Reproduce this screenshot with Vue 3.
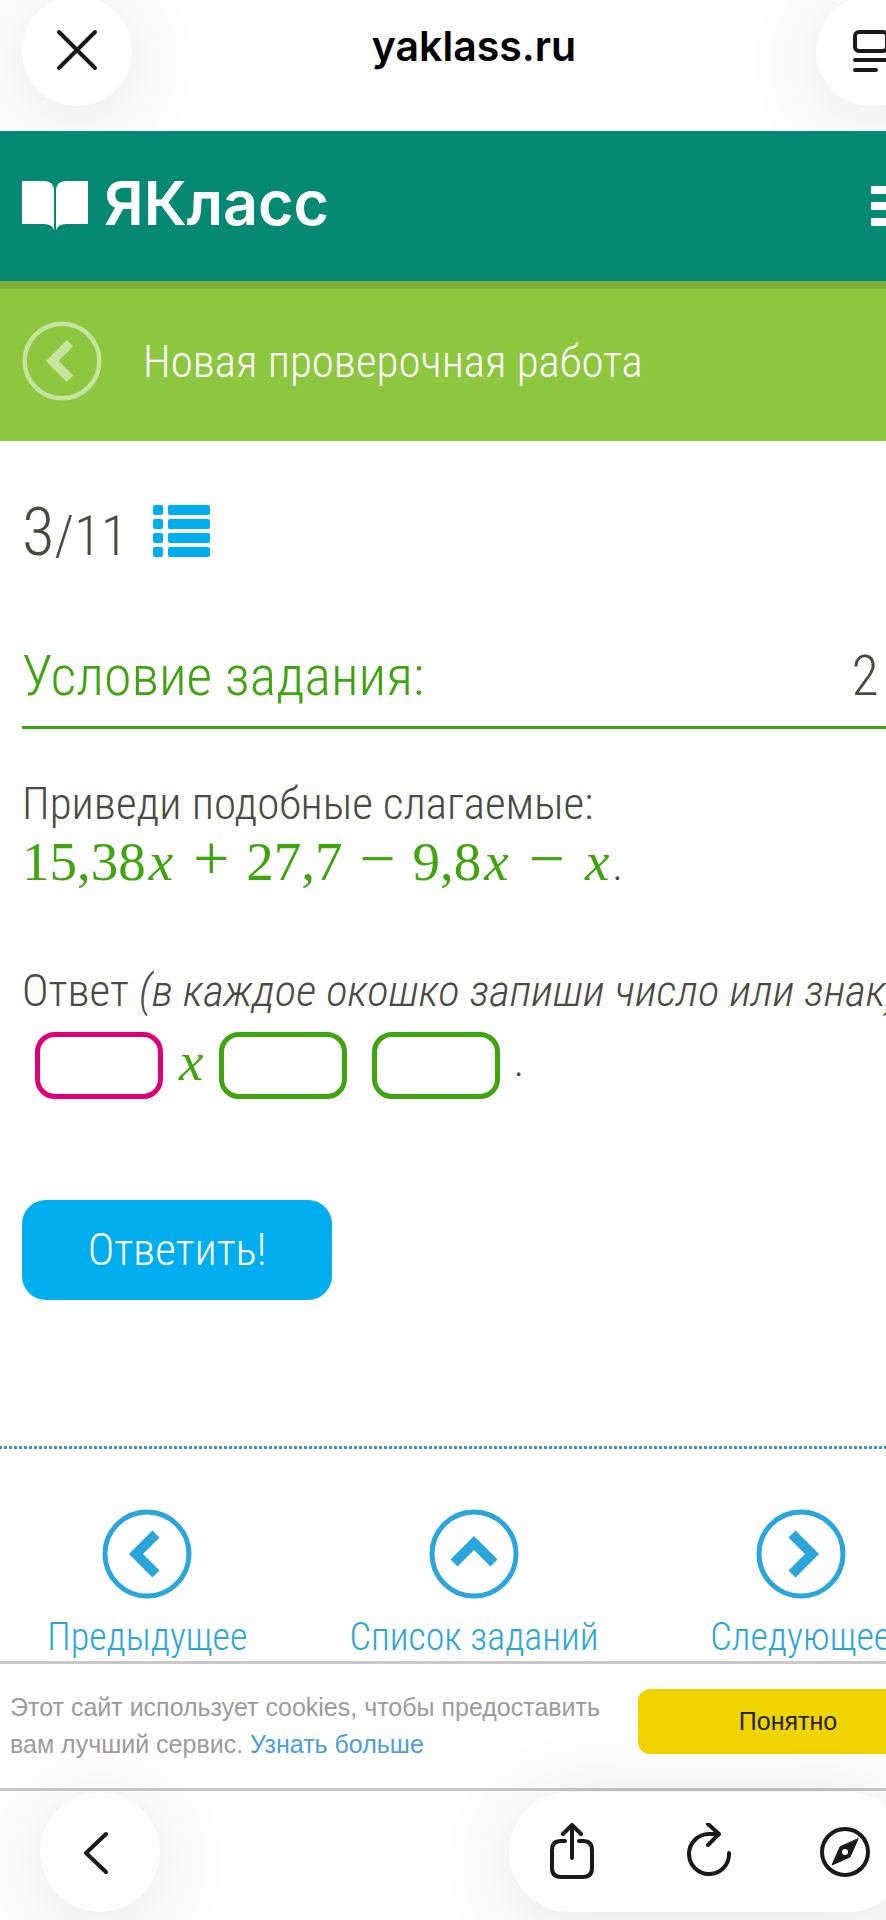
<script setup>
    import { ref } from 'vue';

    const answers = ref(['', '', '']);

    const navLinks = [
        { text: 'Предыдущее', points: '54,25 34,45 54,65' },
        { text: 'Список заданий', points: '25,54 45,34 65,54' },
        { text: 'Следующее', points: '36,25 56,45 36,65' },
    ]
</script>

<template>
    <div class="viewport">
        <div class="page">
            <header class="address-bar">
                <button class="round-button" aria-label="Закрыть">
                    <svg width="42" height="42" viewBox="0 0 42 42">
                        <path d="M3 2 L39 38 M39 2 L3 38" />
                    </svg>
                </button>
                <span class="address">yaklass.ru</span>
                <button class="round-button" aria-label="Режим чтения">
                    <svg width="36" height="42" viewBox="0 0 36 42">
                        <rect x="2" y="2" width="32" height="19" rx="4" />
                        <path d="M2 30 H34 M2 40 H23" />
                    </svg>
                </button>
            </header>

            <div class="site-header">
                <a href="#" class="logo">
                    <svg width="66" height="50" viewBox="0 0 66 50">
                        <path d="M0 0 H22 Q32 0 32 10 V49 Q30 43 22 43 H0 Z" />
                        <path d="M66 0 H44 Q34 0 34 10 V49 Q36 43 44 43 H66 Z" />
                    </svg>
                    <span>ЯКласс</span>
                </a>
                <button class="menu-button" aria-label="Меню">
                    <i></i><i></i><i></i>
                </button>
            </div>

            <div class="title-bar">
                <a href="#" class="back-link" aria-label="Назад">
                    <svg width="80" height="80" viewBox="0 0 90 90">
                        <circle cx="45" cy="45" r="42" />
                        <polyline points="54,25 34,45 54,65" />
                    </svg>
                </a>
                <h1>Новая проверочная работа</h1>
            </div>

            <main class="task">
                <div class="counter">
                    <p><span class="current">3</span>/11</p>
                    <button class="list-button" aria-label="Список">
                        <svg width="57" height="52" viewBox="0 0 57 52">
                            <g v-for="n in 4" :key="n">
                                <rect x="0" :y="(n - 1) * 14" width="10" height="10" rx="2" />
                                <rect x="15" :y="(n - 1) * 14" width="42" height="10" rx="2" />
                            </g>
                        </svg>
                    </button>
                </div>

                <div class="task-heading">
                    <h2>Условие задания:</h2>
                    <span>2 Б</span>
                </div>

                <p class="question">Приведи подобные слагаемые:</p>
                <p class="formula">
                    <span class="math">15,38<i>x</i><b>+</b>27,7<b>−</b>9,8<i>x</i><b>−</b><i>x</i></span>.
                </p>

                <p class="hint">Ответ <em>(в каждое окошко запиши число или знак):</em></p>
                <div class="answer-row">
                    <input v-model="answers[0]" class="active" type="text" aria-label="Коэффициент">
                    <span class="math"><i>x</i></span>
                    <input v-model="answers[1]" type="text" aria-label="Знак">
                    <input v-model="answers[2]" class="last" type="text" aria-label="Число">
                    <span>.</span>
                </div>

                <button class="submit">Ответить!</button>
            </main>

            <nav class="task-nav">
                <a v-for="link in navLinks" :key="link.text" href="#">
                    <svg width="90" height="90" viewBox="0 0 90 90">
                        <circle cx="45" cy="45" r="42" />
                        <polyline :points="link.points" />
                    </svg>
                    <span>{{ link.text }}</span>
                </a>
            </nav>

            <div class="cookies">
                <p>Этот сайт использует cookies, чтобы предоставить<br>вам лучший сервис. <a href="#">Узнать больше</a></p>
                <button>Понятно</button>
            </div>

            <footer class="toolbar">
                <button class="round-button large" aria-label="Назад">
                    <svg width="34" height="43" viewBox="0 0 34 43">
                        <path d="M23 3 L3 22 L23 41" />
                    </svg>
                </button>
                <div class="tools">
                    <button aria-label="Поделиться">
                        <svg width="52" height="58" viewBox="0 0 52 58">
                            <path d="M19 18 H15 Q6 18 6 27 V45 Q6 54 15 54 H37 Q46 54 46 45 V27 Q46 18 37 18 H33" />
                            <path d="M26 35 V2 M17 11 L26 2 L35 11" />
                        </svg>
                    </button>
                    <button aria-label="Обновить">
                        <svg width="52" height="58" viewBox="0 0 52 58">
                            <path d="M46 30 A20 20 0 1 1 26 11 H35 M25 1 L36 11 L25 22" />
                        </svg>
                    </button>
                    <button aria-label="Открыть в браузере">
                        <svg width="52" height="58" viewBox="0 0 52 58">
                            <circle cx="26" cy="29" r="23" />
                            <path class="needle" d="M39 16 L31 34 L13 42 L21 24 Z" />
                            <circle class="pin" cx="26" cy="29" r="3" />
                        </svg>
                    </button>
                </div>
            </footer>
        </div>
    </div>
</template>

<style>
    body {
        margin: 0;
        background-color: #fefefe;
    }
</style>

<style scoped>
    .viewport {
        overflow: hidden;
        min-height: 100vh;
    }

    /* the page is a little wider than the window and runs off its right edge */
    .page {
        width: 107%;
        min-height: 100vh;
        display: flex;
        flex-direction: column;
        font-family: "Roboto Condensed", Roboto, sans-serif;
        font-weight: 300;
        color: #4a4a40;
    }

    h1, h2, p {
        margin: 0;
        font-weight: 300;
    }

    a {
        color: inherit;
        text-decoration: none;
    }

    button {
        border: none;
        padding: 0;
        background: none;
        font: inherit;
        color: inherit;
        cursor: pointer;
    }

    svg {
        display: block;
        fill: none;
    }

    .address-bar {
        display: flex;
        justify-content: space-between;
        align-items: center;
        height: 102px;
        padding: 0 22px 29px;
        overflow: hidden;
    }

    .address {
        padding-bottom: 10px;
        font-family: Inter, sans-serif;
        font-weight: 600;
        font-size: 41px;
        color: #000;
    }

    .round-button {
        display: flex;
        justify-content: center;
        align-items: center;
        flex-shrink: 0;
        width: 110px;
        height: 110px;
        border-radius: 50%;
        background-color: #fff;
        box-shadow: 0 10px 80px rgba(0, 0, 0, 0.1);

        svg {
            stroke: #1a1a1a;
            stroke-width: 4;
            stroke-linecap: round;
            stroke-linejoin: round;
            overflow: visible;
        }
    }

    .site-header {
        display: flex;
        justify-content: space-between;
        align-items: center;
        height: 150px;
        padding: 0 22px;
        background-color: #068973;
    }

    .logo {
        display: flex;
        align-items: center;
        gap: 16px;
        font-family: Inter, sans-serif;
        font-weight: 600;
        font-size: 61px;
        line-height: 70px;
        color: #fff;

        svg {
            fill: #fff;
        }

        span {
            padding-bottom: 6px;
        }
    }

    .menu-button {
        display: flex;
        flex-direction: column;
        gap: 8px;
        width: 55px;

        i {
            height: 8px;
            border-radius: 1px;
            background-color: #fff;
        }
    }

    .title-bar {
        display: flex;
        align-items: center;
        gap: 41px;
        height: 160px;
        padding: 0 22px;
        color: #fff;
        background-color: #8dc740;
        box-shadow: inset 0 8px #7db038;

        h1 {
            font-size: 45px;
        }
    }

    .back-link {
        stroke: #fff;
        opacity: 0.5;
    }

    circle {
        stroke-width: 5;
    }

    polyline {
        stroke-width: 10;
    }

    .task {
        padding: 50px 22px 146px;
        font-size: 45px;
        line-height: 60px;
    }

    .counter {
        display: flex;
        align-items: center;
        gap: 25px;
        height: 80px;
        font-size: 55px;
        line-height: 80px;

        p {
            padding-top: 6px;
        }
    }

    .current {
        font-size: 67px;
    }

    .list-button svg {
        fill: #00adef;
    }

    .task-heading {
        display: flex;
        justify-content: space-between;
        margin-top: 73px;
        padding-right: 4px;
        padding-bottom: 18px;
        border-bottom: 3px solid #3fa50f;
        font-size: 56px;
        line-height: 64px;

        h2 {
            font-size: 56px;
            color: #3fa50f;
        }
    }

    .question {
        margin-top: 45px;
    }

    .math {
        font-family: "Liberation Serif", serif;
        font-weight: 400;
        font-size: 55px;
        line-height: 1;
        color: #3fa50f;

        i {
            margin: 0 3px;
        }

        b {
            margin: 0 17px;
            font-weight: 400;
            font-size: 64px;
            line-height: 0;
        }
    }

    .hint {
        margin-top: 66px;
        white-space: nowrap;
    }

    .answer-row {
        display: flex;
        align-items: center;
        gap: 13px;
        margin-top: 10px;
        padding-left: 13px;

        input {
            box-sizing: border-box;
            width: 128px;
            height: 67px;
            border: 5px solid #3fa50f;
            border-radius: 20px;
            padding: 0 12px;
            background-color: #fff;
            font: inherit;
            text-align: center;
            outline: none;
        }

        span {
            padding-bottom: 8px;
        }

        .active {
            border-color: #dd0078;
        }

        .last {
            margin-left: 12px;
        }
    }

    .submit {
        display: block;
        width: 310px;
        height: 100px;
        margin-top: 101px;
        border-radius: 24px;
        font-size: 45px;
        color: #fff;
        background-color: #00adef;
    }

    .task-nav {
        display: grid;
        grid-template-columns: 1fr 1fr 1fr;
        padding: 63px 0 2px;
        margin: 0 -16px;
        font-size: 38px;
        line-height: 44px;
        color: #2ba6dc;
        background: repeating-linear-gradient(90deg, #3f9cc8 0 3px, transparent 3px 5px) 0 0 / 100% 3px no-repeat;

        a {
            display: flex;
            flex-direction: column;
            align-items: center;
            gap: 16px;
        }

        svg {
            stroke: #2ba6dc;
        }
    }

    .cookies {
        display: flex;
        justify-content: space-between;
        align-items: flex-start;
        padding: 25px 10px;
        border-top: 3px solid #c8c8c8;
        border-bottom: 3px solid #c8c8c8;
        font-family: "Liberation Sans", sans-serif;
        font-size: 25px;
        line-height: 37px;
        color: #9c9c9c;
        background-color: #fefefe;

        a {
            color: #4a9fd8;
        }

        button {
            width: 300px;
            height: 65px;
            border-radius: 12px;
            color: #222;
            background-color: #f0d400;
        }
    }

    .toolbar {
        display: flex;
        justify-content: space-between;
        padding: 1px 40px 8px;

        .large {
            width: 120px;
            height: 120px;
        }
    }

    .large, .tools {
        background-color: #fdfdfd;
        box-shadow: 0 10px 80px rgba(0, 0, 0, 0.1);
    }

    .tools {
        display: flex;
        justify-content: space-between;
        align-items: center;
        width: 399px;
        height: 120px;
        padding: 0 37px;
        border-radius: 60px;
        box-sizing: border-box;

        svg {
            stroke: #1a1a1a;
            stroke-width: 4;
            stroke-linecap: round;
            stroke-linejoin: round;
        }

        circle {
            stroke-width: 4;
        }

        .needle {
            fill: #1a1a1a;
            stroke-width: 1;
        }

        .pin {
            fill: #fff;
            stroke: none;
        }
    }
</style>
